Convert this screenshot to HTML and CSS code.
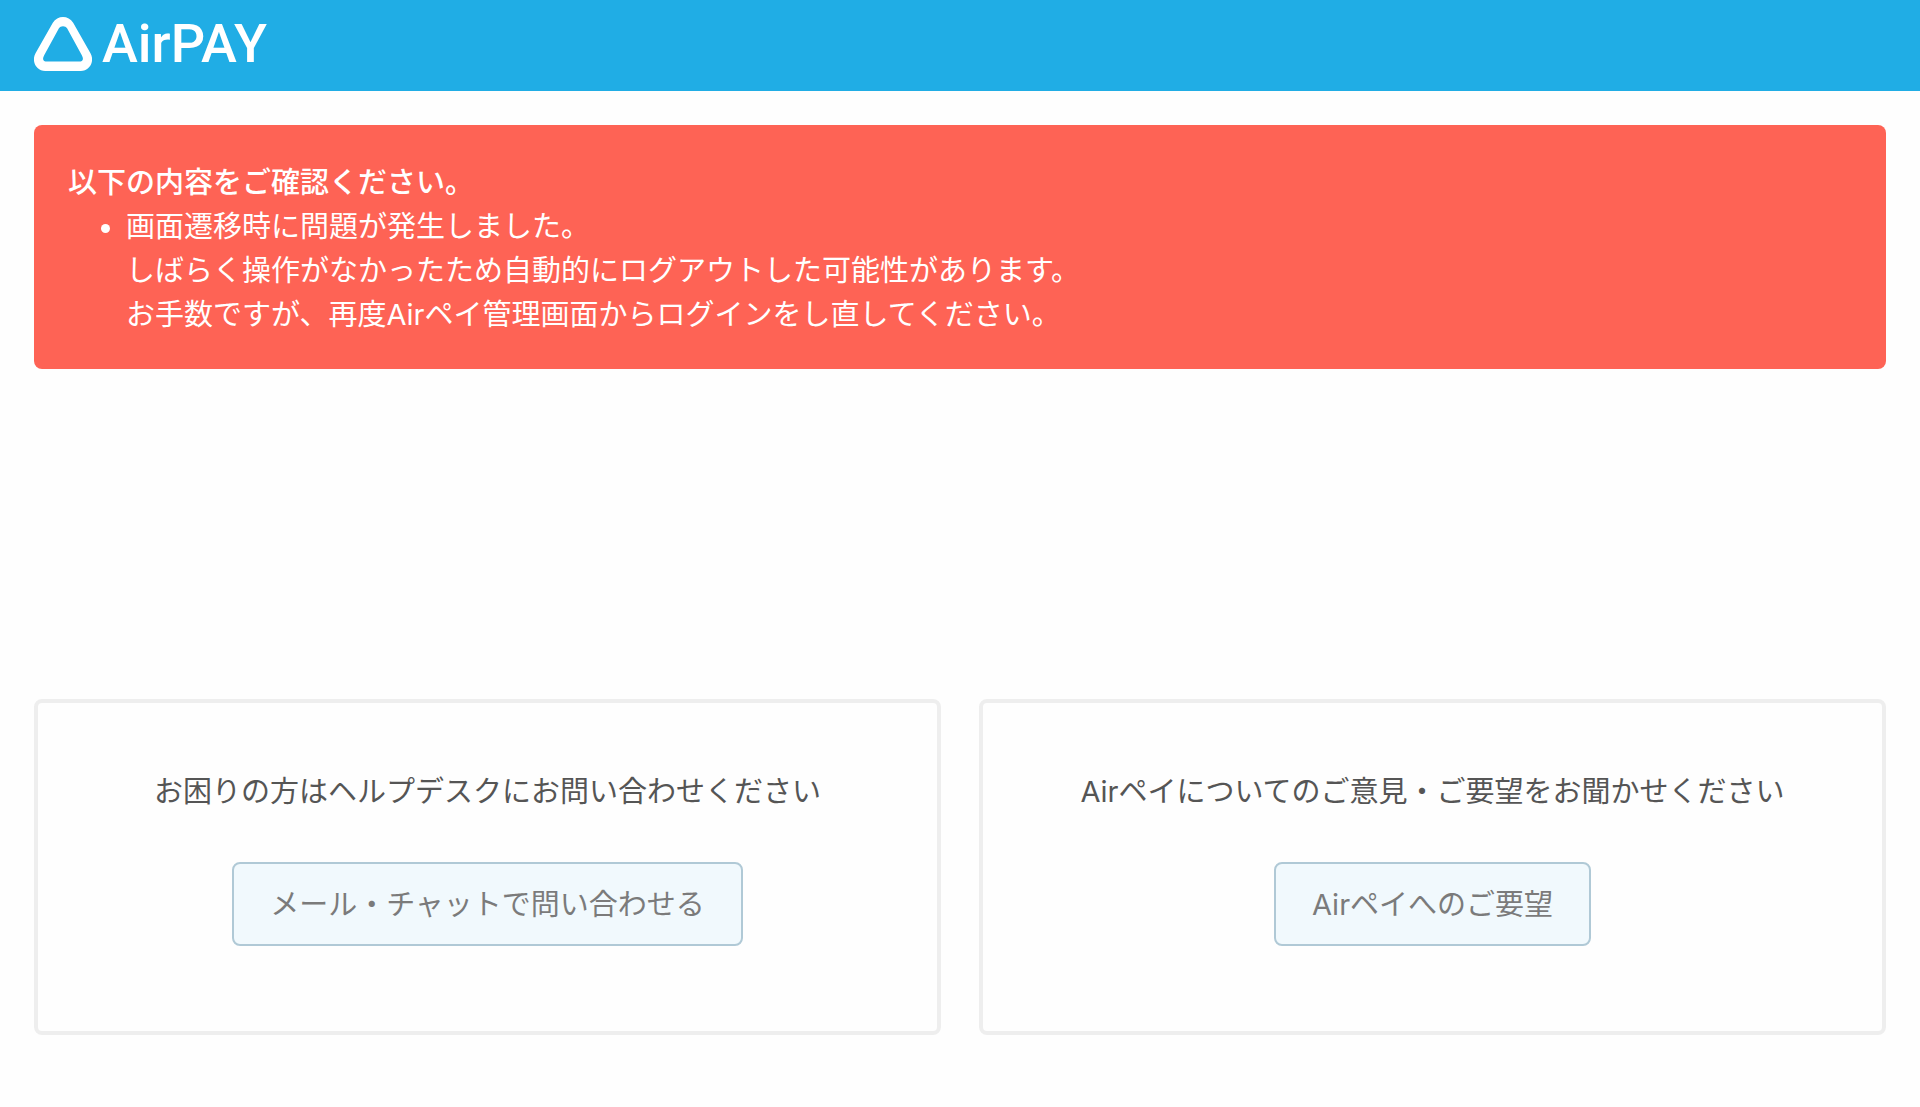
FILE: index.html
```html
<!DOCTYPE html>
<html lang="ja">
<head>
    <meta charset="UTF-8">
    <meta name="viewport" content="width=device-width, initial-scale=1.0">
    <title>AirPAY</title>
    <link rel="stylesheet" href="styles.css">
</head>
<body>
    <header class="header">
        <a class="logo" href="#">
            <svg class="logo-mark" viewBox="0 0 57 53" aria-hidden="true">
                <path fill="#fff" fill-rule="evenodd" d="M18.5 5.5C23 -1.8 34 -1.8 38.5 5.5L55.5 35.5C60 43.5 54.5 53 46 53H11C2.5 53 -3 43.5 1.5 35.5ZM24.5 11L10 37.5C7.8 41.5 9 43.7 13 43.7H44C48 43.7 49.2 41.5 47 37.5L32.5 11C31 8.3 26 8.3 24.5 11Z"/>
            </svg>
            <span class="logo-text">AirPAY</span>
        </a>
    </header>
    <main class="main">
        <div class="alert" role="alert">
            <p class="alert-title">以下の内容をご確認ください。</p>
            <ul class="alert-list">
                <li>画面遷移時に問題が発生しました。<br>しばらく操作がなかったため自動的にログアウトした可能性があります。<br>お手数ですが、再度Airペイ管理画面からログインをし直してください。</li>
            </ul>
        </div>
        <div class="cards">
            <section class="card">
                <p>お困りの方はヘルプデスクにお問い合わせください</p>
                <a class="btn" href="#">メール・チャットで問い合わせる</a>
            </section>
            <section class="card">
                <p>Airペイについてのご意見・ご要望をお聞かせください</p>
                <a class="btn" href="#">Airペイへのご要望</a>
            </section>
        </div>
    </main>
</body>
</html>
```
FILE: styles.css
```css
* {
    box-sizing: border-box;
}
body {
    margin: 0;
    background-color: #fefefe;
    color: #555;
    font-family: Inter, "Noto Sans CJK JP", sans-serif;
    font-size: 29px;
    line-height: 44px;
}
p {
    margin: 0;
}
.header {
    display: flex;
    align-items: center;
    height: 91px;
    padding: 0 34px 4px;
    background-color: #20ade5;
}
.logo {
    display: flex;
    align-items: center;
    gap: 10px;
    color: #fff;
    text-decoration: none;
}
.logo-mark {
    width: 58px;
    height: 54px;
}
.logo-text {
    font-family: Roboto, sans-serif;
    font-size: 54px;
    font-weight: 500;
}
.main {
    padding: 34px;
}
.alert {
    padding: 36px 34px 32px;
    border-radius: 8px;
    background-color: #fe6355;
    color: #fff;
}
.alert-title {
    font-weight: 500;
}
.alert-list {
    margin: 0;
    padding-left: 58px;
}
.cards {
    display: flex;
    gap: 38px;
    margin-top: 330px;
}
.card {
    display: flex;
    flex: 1;
    flex-direction: column;
    align-items: center;
    gap: 48px;
    padding: 67px 34px 85px;
    border: 4px solid #eee;
    border-radius: 8px;
}
.btn {
    padding: 19px 36px 17px;
    border: 2px solid #b0c9d6;
    border-radius: 8px;
    background-color: #f1f9fd;
    color: #7b7b7b;
    text-decoration: none;
}
```
